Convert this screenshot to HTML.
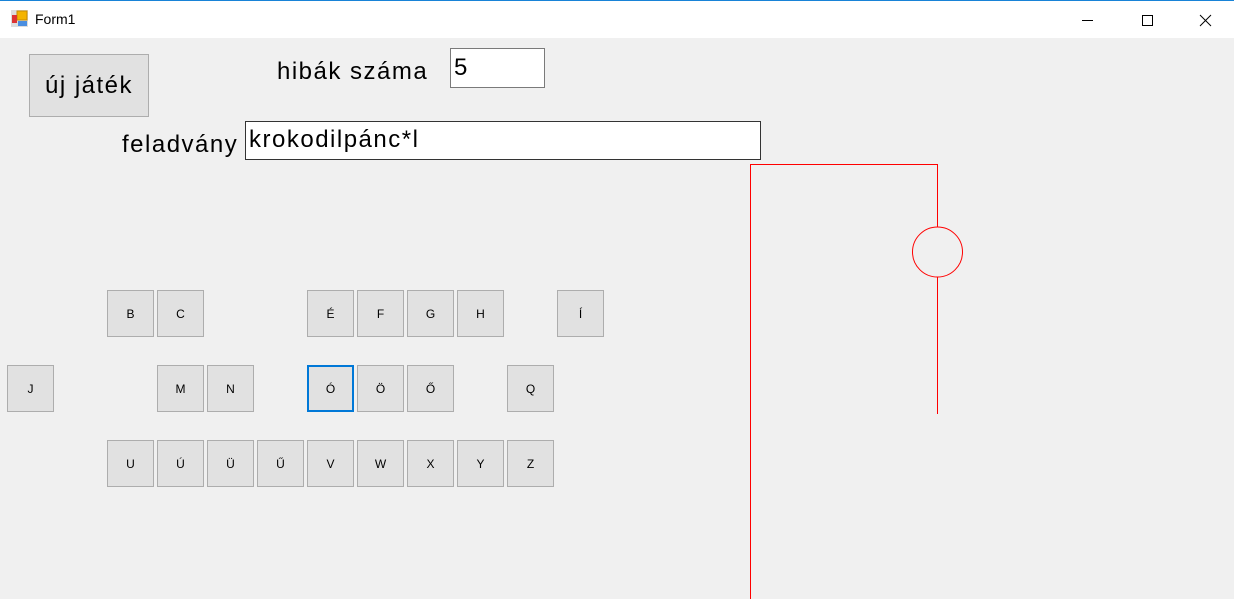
<!DOCTYPE html>
<html><head><meta charset="utf-8"><style>
*{margin:0;padding:0;box-sizing:border-box}
body{width:1234px;height:599px;overflow:hidden;background:#f0f0f0;font-family:"Liberation Sans",sans-serif;position:relative}
.title{position:absolute;left:0;top:0;width:1234px;height:38px;background:#fff;border-top:1px solid #1883d7}
.t{position:absolute;left:35px;top:10px;font-size:14px;color:#000}
.ab{position:absolute}
.btn{position:absolute;width:47px;height:47px;background:#e1e1e1;border:1px solid #adadad;font-size:12px;color:#000;display:flex;align-items:center;justify-content:center}
.sel{border:2px solid #0078d7}
.lbl{position:absolute;font-size:24px;letter-spacing:1.5px;color:#000}
.box{position:absolute;background:#fff;border:1px solid #7a7a7a;font-size:24px;letter-spacing:1.5px;padding-left:3px;line-height:36px}
</style></head><body>
<div class="title">
<svg class="ab" style="left:11px;top:9px" width="18" height="18"><rect x="0" y="0" width="17" height="17" fill="#ddd"/><rect x="6" y="1" width="10" height="9" fill="#f4b400" stroke="#c88a00"/><rect x="1" y="5" width="5" height="8" fill="#d33"/><rect x="7" y="11" width="9" height="5" fill="#4a8ee0"/></svg>
<div class="t">Form1</div>
<svg class="ab" style="left:1082px;top:12px" width="140" height="16" stroke="#000" stroke-width="1" fill="none">
<line x1="0" y1="7.5" x2="11" y2="7.5"/>
<rect x="60.5" y="2.5" width="10" height="10"/>
<line x1="118" y1="2" x2="129" y2="13"/><line x1="129" y1="2" x2="118" y2="13"/>
</svg>
</div>
<div class="btn" style="left:29px;top:54px;width:120px;height:63px;font-size:24px;letter-spacing:1.5px">új játék</div>
<div class="lbl" style="left:277px;top:58px">hibák száma</div>
<div class="box" style="left:450px;top:48px;width:95px;height:40px;line-height:38px">5</div>
<div class="lbl" style="left:122px;top:131px">feladvány</div>
<div class="box" style="left:245px;top:121px;width:516px;height:39px;border-color:#333">krokodilpánc*l</div>
<div class="btn" style="left:107px;top:290px">B</div>
<div class="btn" style="left:157px;top:290px">C</div>
<div class="btn" style="left:307px;top:290px">É</div>
<div class="btn" style="left:357px;top:290px">F</div>
<div class="btn" style="left:407px;top:290px">G</div>
<div class="btn" style="left:457px;top:290px">H</div>
<div class="btn" style="left:557px;top:290px">Í</div>
<div class="btn" style="left:7px;top:365px">J</div>
<div class="btn" style="left:157px;top:365px">M</div>
<div class="btn" style="left:207px;top:365px">N</div>
<div class="btn sel" style="left:307px;top:365px">Ó</div>
<div class="btn" style="left:357px;top:365px">Ö</div>
<div class="btn" style="left:407px;top:365px">Ő</div>
<div class="btn" style="left:507px;top:365px">Q</div>
<div class="btn" style="left:107px;top:440px">U</div>
<div class="btn" style="left:157px;top:440px">Ú</div>
<div class="btn" style="left:207px;top:440px">Ü</div>
<div class="btn" style="left:257px;top:440px">Ű</div>
<div class="btn" style="left:307px;top:440px">V</div>
<div class="btn" style="left:357px;top:440px">W</div>
<div class="btn" style="left:407px;top:440px">X</div>
<div class="btn" style="left:457px;top:440px">Y</div>
<div class="btn" style="left:507px;top:440px">Z</div>
<svg class="ab" style="left:0;top:0" width="1234" height="599" fill="none" stroke="#ff0000" stroke-width="1">
<polyline points="750.5,599 750.5,164.5 937.5,164.5 937.5,227"/>
<circle cx="937.5" cy="252" r="25"/>
<line x1="937.5" y1="277" x2="937.5" y2="414"/>
</svg>
</body></html>
